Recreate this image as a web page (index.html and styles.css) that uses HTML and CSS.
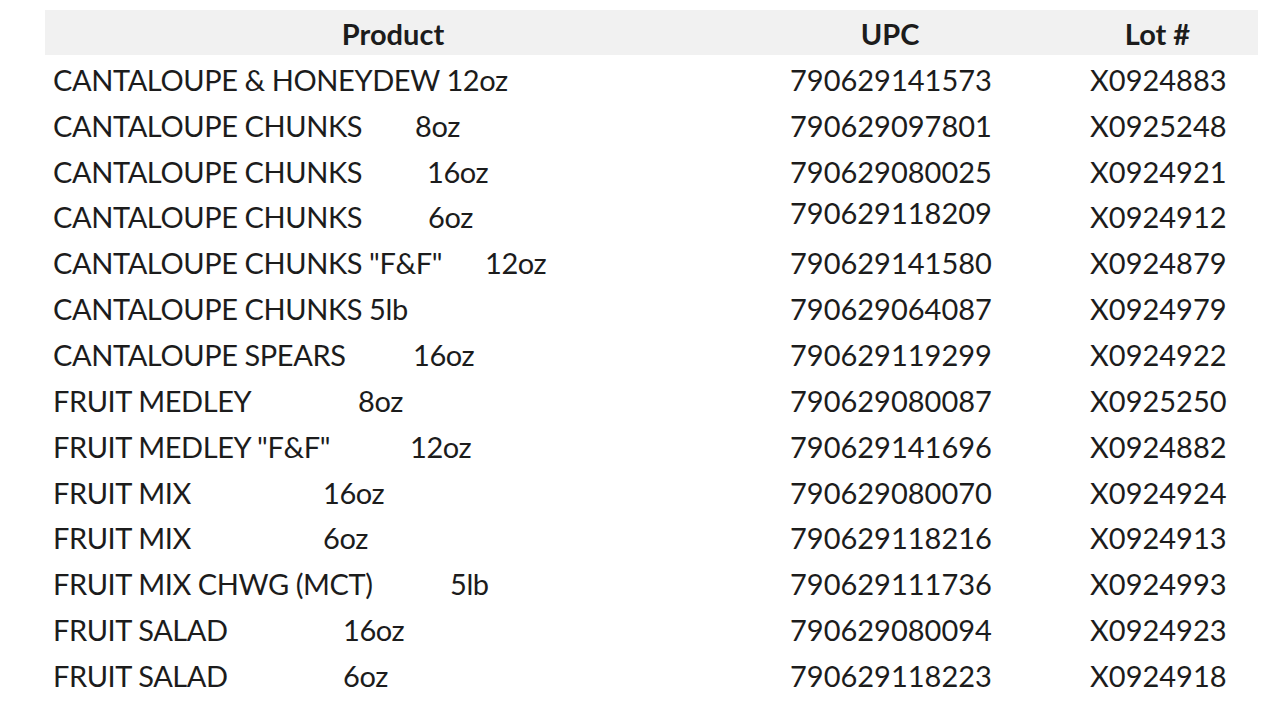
FILE: index.html
```html
<!DOCTYPE html>
<html>
<head>
<meta charset="utf-8">
<link rel="stylesheet" href="styles.css">
</head>
<body>
<div class="sheet">
  <div class="table">
    <div class="row head">
      <div class="cell c-prod">Product</div>
      <div class="cell c-upc">UPC</div>
      <div class="cell c-lot">Lot #</div>
    </div>
    <div class="row"><div class="cell c-prod">CANTALOUPE &amp; HONEYDEW 12oz</div><div class="cell c-upc">790629141573</div><div class="cell c-lot">X0924883</div></div>
    <div class="row"><div class="cell c-prod"><span class="nm w362">CANTALOUPE CHUNKS</span>8oz</div><div class="cell c-upc">790629097801</div><div class="cell c-lot">X0925248</div></div>
    <div class="row"><div class="cell c-prod"><span class="nm w374">CANTALOUPE CHUNKS</span>16oz</div><div class="cell c-upc">790629080025</div><div class="cell c-lot">X0924921</div></div>
    <div class="row"><div class="cell c-prod"><span class="nm w375">CANTALOUPE CHUNKS</span>6oz</div><div class="cell c-upc up">790629118209</div><div class="cell c-lot">X0924912</div></div>
    <div class="row"><div class="cell c-prod"><span class="nm w432">CANTALOUPE CHUNKS "F&amp;F"</span>12oz</div><div class="cell c-upc">790629141580</div><div class="cell c-lot">X0924879</div></div>
    <div class="row"><div class="cell c-prod">CANTALOUPE CHUNKS 5lb</div><div class="cell c-upc">790629064087</div><div class="cell c-lot">X0924979</div></div>
    <div class="row"><div class="cell c-prod"><span class="nm w360">CANTALOUPE SPEARS</span>16oz</div><div class="cell c-upc">790629119299</div><div class="cell c-lot">X0924922</div></div>
    <div class="row"><div class="cell c-prod"><span class="nm w305">FRUIT MEDLEY</span>8oz</div><div class="cell c-upc">790629080087</div><div class="cell c-lot">X0925250</div></div>
    <div class="row"><div class="cell c-prod"><span class="nm w357">FRUIT MEDLEY "F&amp;F"</span>12oz</div><div class="cell c-upc">790629141696</div><div class="cell c-lot">X0924882</div></div>
    <div class="row"><div class="cell c-prod"><span class="nm w270">FRUIT MIX</span>16oz</div><div class="cell c-upc">790629080070</div><div class="cell c-lot">X0924924</div></div>
    <div class="row"><div class="cell c-prod"><span class="nm w270">FRUIT MIX</span>6oz</div><div class="cell c-upc">790629118216</div><div class="cell c-lot">X0924913</div></div>
    <div class="row"><div class="cell c-prod"><span class="nm w397">FRUIT MIX CHWG (MCT)</span>5lb</div><div class="cell c-upc">790629111736</div><div class="cell c-lot">X0924993</div></div>
    <div class="row"><div class="cell c-prod"><span class="nm w290">FRUIT SALAD</span>16oz</div><div class="cell c-upc">790629080094</div><div class="cell c-lot">X0924923</div></div>
    <div class="row"><div class="cell c-prod"><span class="nm w290">FRUIT SALAD</span>6oz</div><div class="cell c-upc">790629118223</div><div class="cell c-lot">X0924918</div></div>
  </div>
</div>
</body>
</html>
```
FILE: styles.css
```css
html, body {
  margin: 0;
  padding: 0;
  background: #ffffff;
}
body {
  font-family: Lato, "Open Sans", "Liberation Sans", sans-serif;
  color: #1c1c1c;
  width: 1280px;
  height: 725px;
  overflow: hidden;
}
.sheet {
  padding: 10px 0 0 45px;
}
.table {
  width: 1213px;
}
.row {
  display: grid;
  grid-template-columns: 696px 298px 219px;
  box-sizing: border-box;
  height: 45.85px;
  padding-top: 3px;
  align-items: center;
  font-size: 29px;
  line-height: 1;
  white-space: nowrap;
}
.row.head {
  height: 45px;
  padding-top: 2px;
  background: #f1f1f1;
  font-weight: 700;
  font-size: 29px;
}
.head .cell {
  text-align: center;
  padding-left: 0;
  letter-spacing: 0;
}
.head .c-lot {
  padding-left: 18px;
}
.c-prod {
  padding-left: 8px;
  letter-spacing: -0.4px;
}
.c-upc {
  padding-left: 49px;
}
.c-lot {
  padding-left: 51px;
}
.up {
  position: relative;
  top: -4px;
}
.nm {
  display: inline-block;
}
.w270 { width: 270px; }
.w290 { width: 290px; }
.w305 { width: 305px; }
.w357 { width: 357px; }
.w360 { width: 360px; }
.w362 { width: 362px; }
.w374 { width: 374px; }
.w375 { width: 375px; }
.w397 { width: 397px; }
.w432 { width: 432px; }
```
